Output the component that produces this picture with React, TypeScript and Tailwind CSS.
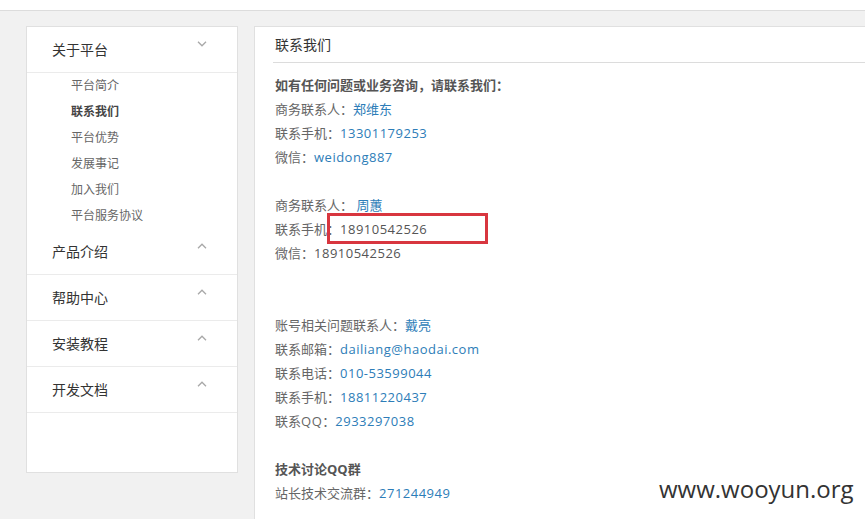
const FONT = '"Open Sans", "Noto Sans CJK SC", sans-serif';

function Chevron({ up }: { up?: boolean }) {
  return (
    <svg width="10" height="6" viewBox="0 0 10 6" className="absolute right-[30px] top-[14px]">
      <path
        d={up ? "M1 5.2L5 1.2l4 4" : "M1 0.8l4 4 4-4"}
        fill="none"
        stroke="#a8a8a8"
        strokeWidth="1.3"
      />
    </svg>
  );
}

function Link({ children }: { children: React.ReactNode }) {
  return <span className="text-[#2d7db8]">{children}</span>;
}

function Num({ children, blue }: { children: React.ReactNode; blue?: boolean }) {
  return (
    <span className={blue ? "tracking-[0.5px] text-[#2d7db8]" : "tracking-[0.5px] text-[#555]"}>
      {children}
    </span>
  );
}

const subItems = ["平台简介", "联系我们", "平台优势", "发展事记", "加入我们", "平台服务协议"];
const sections = ["产品介绍", "帮助中心", "安装教程", "开发文档"];

export default function App() {
  return (
    <div
      className="relative w-[865px] h-[519px] overflow-hidden bg-[#f1f1f1]"
      style={{ fontFamily: FONT }}
    >
      {/* top strip */}
      <div className="h-[11px] bg-white border-b border-[#dcdcdc]" />

      <div className="flex gap-[16px] pl-[26px] pt-[15px]">
        {/* Sidebar */}
        <aside className="w-[212px] h-[447px] shrink-0 bg-white border border-[#e0e0e0]">
          <div className="relative h-[46px] flex items-center pl-[25px] border-b border-[#ebebeb] text-[14px] text-[#333]">
            关于平台
            <Chevron />
          </div>
          <ul className="pl-[44px] text-[12px] leading-[26px] text-[#666]">
            {subItems.map((s) => (
              <li key={s} className={s === "联系我们" ? "font-bold text-[#444]" : ""}>
                {s}
              </li>
            ))}
          </ul>
          {sections.map((s) => (
            <div
              key={s}
              className="relative h-[46px] flex items-center pl-[25px] border-b border-[#ebebeb] text-[14px] text-[#333]"
            >
              {s}
              <Chevron up />
            </div>
          ))}
        </aside>

        {/* Main */}
        <main className="w-[700px] h-[600px] shrink-0 bg-white border border-[#e0e0e0] pl-[18px]">
          <div className="h-[36px] flex items-center pl-[2px] border-b border-[#dcdcdc] text-[14px] text-[#333]">
            联系我们
          </div>
          <div className="pl-[2px] pt-[10px] text-[13px] leading-[24px] text-[#666]">
            <p className="font-bold text-[#555]">如有任何问题或业务咨询，请联系我们：</p>
            <p>
              商务联系人：<Link>郑维东</Link>
            </p>
            <p>
              联系手机：<Num blue>13301179253</Num>
            </p>
            <p>
              微信：<Num blue>weidong887</Num>
            </p>

            <p className="mt-6">
              商务联系人： <Link>周蕙</Link>
            </p>
            <p>
              联系手机：<Num>18910542526</Num>
            </p>
            <p>
              微信：<Num>18910542526</Num>
            </p>

            <p className="mt-12">
              账号相关问题联系人：<Link>戴亮</Link>
            </p>
            <p>
              联系邮箱：<Num blue>dailiang@haodai.com</Num>
            </p>
            <p>
              联系电话：<Num blue>010-53599044</Num>
            </p>
            <p>
              联系手机：<Num blue>18811220437</Num>
            </p>
            <p>
              联系<span className="tracking-[0.5px]">QQ</span>：<Num blue>2933297038</Num>
            </p>

            <p className="mt-6 font-bold text-[#555]">技术讨论QQ群</p>
            <p>
              站长技术交流群：<Num blue>271244949</Num>
            </p>
          </div>
        </main>
      </div>

      {/* red highlight annotation */}
      <div className="absolute left-[327px] top-[213px] w-[161px] h-[31px] border-[3px] border-[#d8363f]" />

      {/* watermark */}
      <div className="absolute left-[659px] top-[477px] text-[24px] leading-none text-[#333]">
        www.wooyun.org
      </div>
    </div>
  );
}
